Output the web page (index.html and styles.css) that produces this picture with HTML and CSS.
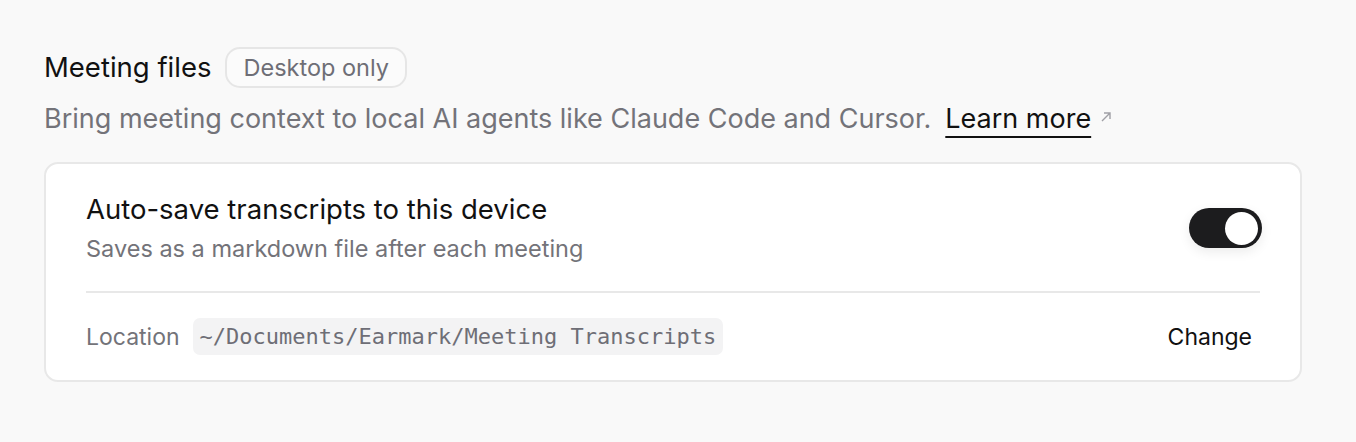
FILE: index.html
```html
<!DOCTYPE html>
<html lang="en">
<head>
    <meta charset="UTF-8">
    <meta name="viewport" content="width=device-width, initial-scale=1.0">
    <title>Meeting files</title>
    <link rel="stylesheet" href="styles.css">
</head>
<body>
    <section class="section">
        <div class="section-head">
            <h2>Meeting files</h2>
            <span class="badge">Desktop only</span>
        </div>
        <p class="section-desc">
            Bring meeting context to local AI agents like Claude Code and Cursor.
            <a href="#" class="learn-more">Learn more</a>
            <svg class="ext-icon" width="12" height="12" viewBox="0 0 12 12" fill="none">
                <path d="M2 10L10 2M4 2H10V8" stroke="#a0a0a6" stroke-width="1.4"/>
            </svg>
        </p>

        <div class="card">
            <div class="card-row">
                <div>
                    <div class="row-title">Auto-save transcripts to this device</div>
                    <div class="row-sub">Saves as a markdown file after each meeting</div>
                </div>
                <label class="toggle">
                    <input type="checkbox" checked>
                    <span class="knob"></span>
                </label>
            </div>
            <div class="card-row location-row">
                <div class="location">
                    <span class="location-label">Location</span>
                    <code class="path">~/Documents/Earmark/Meeting Transcripts</code>
                </div>
                <button class="change-btn">Change</button>
            </div>
        </div>
    </section>
</body>
</html>
```

FILE: styles.css
```css
body {
    font-family: Inter, "Noto Sans", sans-serif;
    background-color: #f9f9f9;
    margin: 0;
    padding: 0;
    color: #111;
}

.section {
    padding: 47px 54px 0 44px;
}

.section-head {
    display: flex;
    align-items: center;
    gap: 14px;
}

h2 {
    font-size: 27.5px;
    line-height: 33px;
    font-weight: 400;
    margin: 0;
}

.badge {
    font-size: 23.5px;
    line-height: 28px;
    color: #6e6e76;
    border: 2px solid #e6e6e6;
    border-radius: 15px;
    padding: 4.5px 16px;
    background-color: #fbfbfb;
}

.section-desc {
    font-size: 27px;
    line-height: 32px;
    color: #737379;
    margin: 15px 0 27px;
    display: flex;
    align-items: center;
}

.learn-more {
    color: #111;
    text-decoration: underline;
    text-decoration-thickness: 2px;
    text-underline-offset: 8px;
    margin-left: 14px;
}

.ext-icon {
    margin: 0 0 4px 9px;
}

.card {
    background-color: #fff;
    border: 2px solid #e8e8e8;
    border-radius: 14px;
    padding: 0 40px;
}

.card-row {
    display: flex;
    justify-content: space-between;
    align-items: center;
    padding: 29px 0 28px;
}

.card-row + .card-row {
    border-top: 2px solid #e8e8e8;
    padding: 25px 0 25px;
}

.row-title {
    font-size: 27.5px;
    line-height: 33px;
    margin-bottom: 9px;
}

.row-sub {
    font-size: 23.5px;
    line-height: 28px;
    color: #737379;
}

.toggle {
    position: relative;
    width: 73px;
    height: 40px;
    display: inline-block;
    margin: 0 -2px 0 0;
}

.toggle input {
    display: none;
}

.knob {
    position: absolute;
    inset: 0;
    background-color: #1c1c1e;
    border-radius: 20px;
    box-shadow: 0 4px 12px rgba(0, 0, 0, 0.08);
}

.knob::after {
    content: "";
    position: absolute;
    top: 3.5px;
    right: 4px;
    width: 33px;
    height: 33px;
    border-radius: 50%;
    background-color: #fff;
}

.location {
    display: flex;
    align-items: center;
    gap: 13px;
}

.location-label {
    font-size: 23px;
    color: #737379;
}

.path {
    font-family: "DejaVu Sans Mono", monospace;
    font-size: 22px;
    line-height: 26px;
    color: #6e6e76;
    background-color: #f3f3f4;
    border-radius: 7px;
    padding: 5.5px 7px 5.5px 7px;
}

.change-btn {
    font-family: inherit;
    font-size: 23px;
    color: #111;
    background: none;
    border: none;
    padding: 0 8px 0 0;
    cursor: pointer;
}
```
